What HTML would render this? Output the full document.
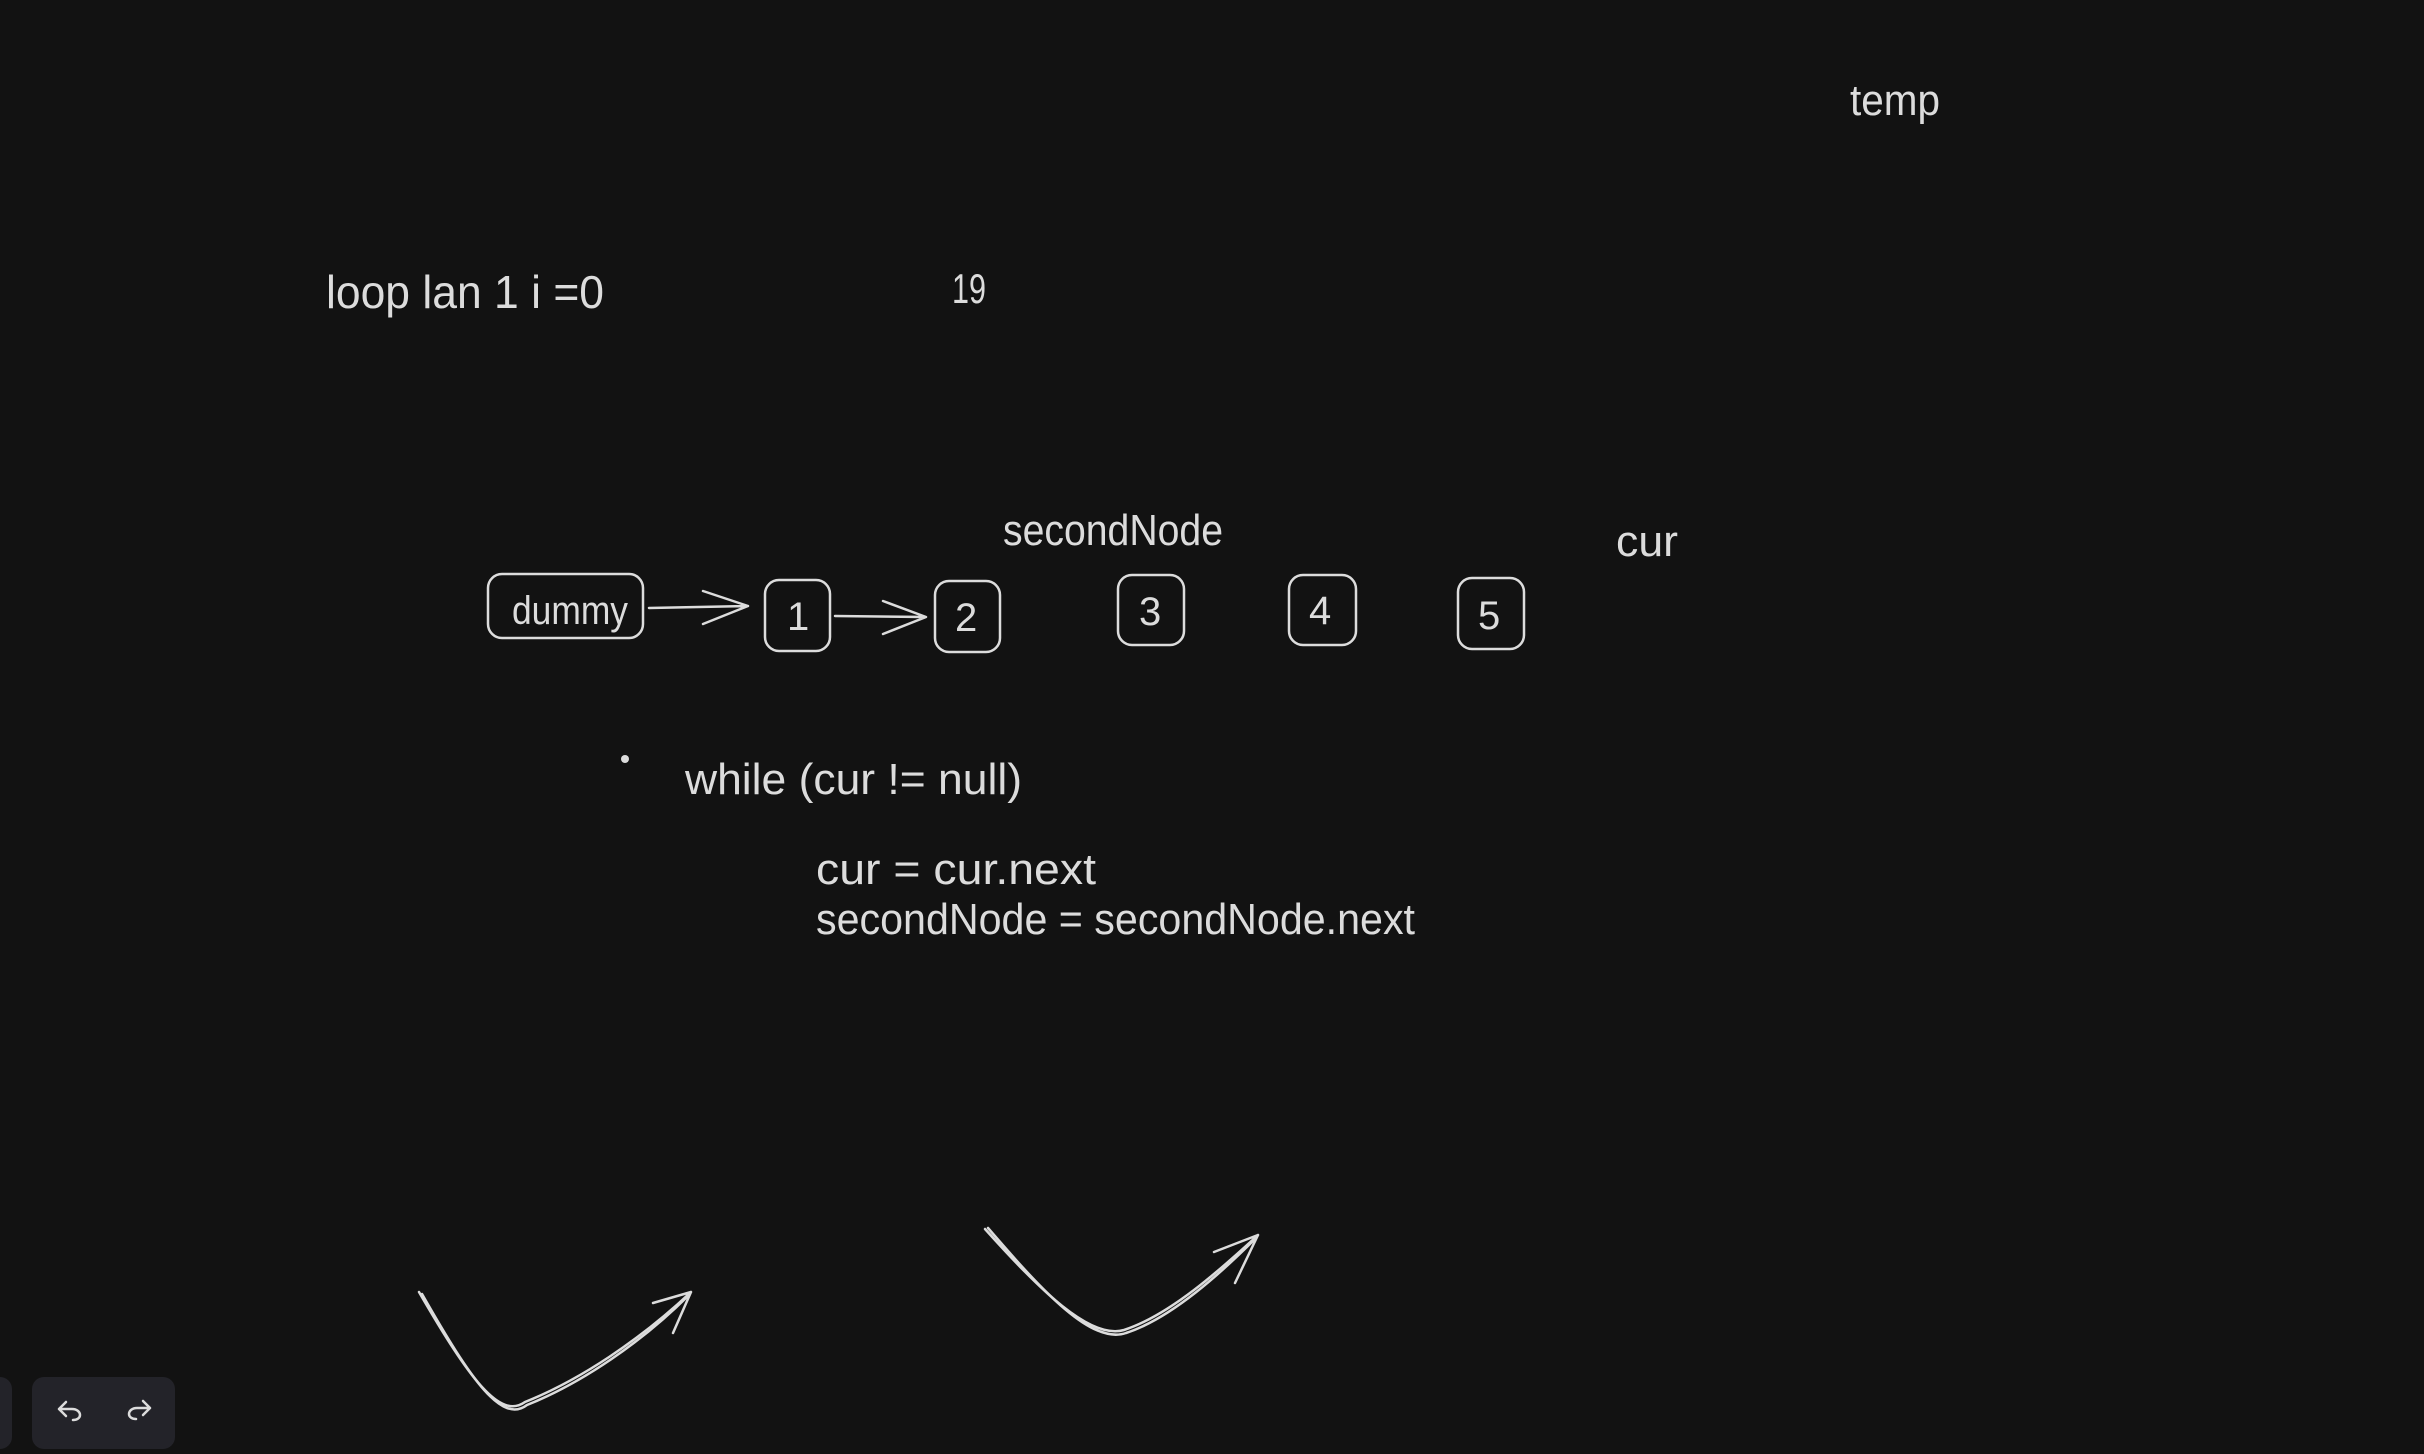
<!DOCTYPE html>
<html><head><meta charset="utf-8"><style>
html,body{margin:0;padding:0;background:#121212;width:2424px;height:1454px;overflow:hidden}
svg{display:block}
text{font-family:"Liberation Sans",sans-serif;fill:#dcdcdc}
</style></head><body>
<svg width="2424" height="1454" viewBox="0 0 2424 1454" xmlns="http://www.w3.org/2000/svg">
<rect width="2424" height="1454" fill="#121212"/>
<g font-size="44">
<text x="1850" y="115" textLength="90" lengthAdjust="spacingAndGlyphs">temp</text>
<text x="326" y="308" font-size="46" textLength="278" lengthAdjust="spacingAndGlyphs">loop lan 1 i =0</text>
<text x="952" y="303" font-size="42" textLength="34" lengthAdjust="spacingAndGlyphs">19</text>
<text x="1003" y="545" textLength="220" lengthAdjust="spacingAndGlyphs">secondNode</text>
<text x="1616" y="556" textLength="62" lengthAdjust="spacingAndGlyphs">cur</text>
<text x="512" y="624" font-size="40" textLength="116" lengthAdjust="spacingAndGlyphs">dummy</text>
<text x="787" y="630" font-size="40">1</text>
<text x="955" y="631" font-size="40">2</text>
<text x="1139" y="625" font-size="40">3</text>
<text x="1309" y="624" font-size="40">4</text>
<text x="1478" y="629" font-size="40">5</text>
<text x="685" y="794" textLength="337" lengthAdjust="spacingAndGlyphs">while (cur != null)</text>
<text x="816" y="884" textLength="280" lengthAdjust="spacingAndGlyphs">cur = cur.next</text>
<text x="816" y="934" textLength="599" lengthAdjust="spacingAndGlyphs">secondNode = secondNode.next</text>
</g>
<g fill="none" stroke="#dcdcdc" stroke-width="2.5" stroke-linecap="round" stroke-linejoin="round">
<rect x="488" y="574" width="155" height="64" rx="14"/>
<rect x="765" y="580" width="65" height="71" rx="14"/>
<rect x="935" y="581" width="65" height="71" rx="14"/>
<rect x="1118" y="575" width="66" height="70" rx="14"/>
<rect x="1289" y="575" width="67" height="70" rx="14"/>
<rect x="1458" y="578" width="66" height="71" rx="14"/>
<path d="M649 608 L748 606 M703 591 L748 606 L703 624"/>
<path d="M835 616 L926 617 M883 601 L926 617 L883 634"/>
<path d="M419 1292 C470 1380 500 1420 525 1402 C580 1380 640 1340 691 1292 M653 1303 L691 1292 L673 1333"/>
<path d="M422 1294 C472 1382 502 1424 527 1405 C582 1383 642 1342 689 1295"/>
<path d="M985 1229 C1040 1290 1090 1340 1124 1330 C1170 1315 1220 1270 1258 1235 M1214 1252 L1258 1235 L1235 1283"/>
<path d="M988 1228 C1043 1292 1092 1345 1126 1333 C1172 1318 1222 1272 1256 1238"/>
</g>
<circle cx="625" cy="759" r="4" fill="#dcdcdc"/>
<rect x="-20" y="1377" width="32" height="72" rx="12" fill="#232329"/>
<rect x="32" y="1377" width="143" height="72" rx="12" fill="#232329"/>
<g fill="none" stroke="#dcdcdc" stroke-width="2.5" stroke-linecap="round" stroke-linejoin="round">
<path d="M66 1402 L59 1409 L66 1416 M59 1409 L72 1409 C77 1409 80 1412 80 1415 C80 1418 77 1420 73 1420"/>
<path d="M143 1401 L150 1408 L143 1415 M150 1408 L137 1408 C132 1408 129 1411 129 1414 C129 1417 132 1419 136 1419"/>
</g>
</svg>
</body></html>
